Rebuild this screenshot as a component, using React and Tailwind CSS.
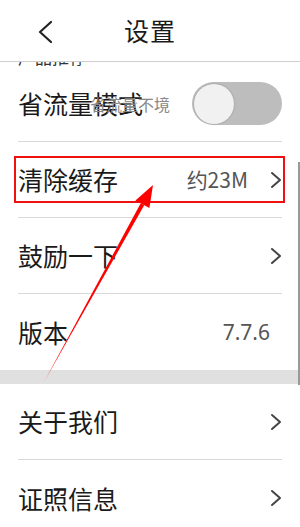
import React from "react";

const font = { fontFamily: '"Noto Sans CJK SC", "Noto Sans", sans-serif' };

const Chevron = () => (
    <svg width="12" height="18" viewBox="0 0 12 18" className="shrink-0">
        <path d="M2 2 L10 9 L2 16" fill="none" stroke="#444" strokeWidth="2" strokeLinecap="round" strokeLinejoin="round" />
    </svg>
);

const Row = ({ children, last }) => (
    <div className={"relative flex items-center h-[76px] " + (last ? "" : "border-b border-[#d9d9d9]")}>
        {children}
    </div>
);

export default function App() {
    return (
        <div className="relative w-[300px] h-[527px] overflow-hidden bg-white text-[#1a1a1a]" style={font}>
            {/* header */}
            <div className="relative flex items-center justify-center h-[62px] border-b border-[#cfcfcf]">
                <svg width="16" height="24" viewBox="0 0 16 24" className="absolute left-[37px] top-[20px]">
                    <path d="M14 2 L3 12 L14 22" fill="none" stroke="#222" strokeWidth="2.2" strokeLinecap="round" strokeLinejoin="round" />
                </svg>
                <span className="text-[25px] leading-none tracking-[1px]">设置</span>
            </div>

            <div className="px-[18px]">
                {/* partly hidden item under header */}
                <div className="h-[4px] overflow-hidden">
                    <div className="-mt-[14px] text-[17px] leading-[18px] text-[#333]">产品推荐</div>
                </div>

                <Row>
                    <span className="text-[25px] leading-none">省流量模式</span>
                    <span className="-ml-[53px] text-[16px] leading-none text-[#888]">省流量不境</span>
                    <div className="ml-auto w-[90px] h-[43px] rounded-full bg-[#bdbdbd] flex items-center px-[2px]">
                        <div className="w-[40px] h-[40px] rounded-full bg-[#f1f1f1] shadow-[0_0_2px_rgba(0,0,0,0.25)]" />
                    </div>
                </Row>

                <Row>
                    <span className="text-[25px] leading-none">清除缓存</span>
                    <span className="ml-auto mr-[22px] text-[21px] leading-none text-[#555]">约23M</span>
                    <Chevron />
                    <div className="absolute top-[14px] left-[-4px] right-[-3px] h-[47px] border-2 border-[#f01010]" />
                </Row>

                <Row>
                    <span className="text-[25px] leading-none">鼓励一下</span>
                    <span className="ml-auto" />
                    <Chevron />
                </Row>

                <Row last>
                    <span className="text-[25px] leading-none">版本</span>
                    <span className="ml-auto mr-[12px] text-[21px] leading-none text-[#555]" style={{ fontFamily: '"Noto Sans", sans-serif' }}>7.7.6</span>
                </Row>
            </div>

            <div className="h-[14px] bg-[#e0e0e0]" />

            <div className="px-[18px]">
                <Row>
                    <span className="text-[25px] leading-none">关于我们</span>
                    <span className="ml-auto" />
                    <Chevron />
                </Row>
                <Row last>
                    <span className="text-[25px] leading-none">证照信息</span>
                    <span className="ml-auto" />
                    <Chevron />
                </Row>
            </div>

            {/* scrollbar */}
            <div className="absolute left-[298px] top-[162px] w-[2px] h-[223px] bg-[#999]" />

            {/* annotation arrow */}
            <svg className="absolute inset-0 pointer-events-none" width="300" height="527" viewBox="0 0 300 527">
                <polygon points="44,382 140.7,203.3 144.2,205.3" fill="#f00" />
                <polygon points="153,185 135.4,200.4 149.4,208.1" fill="#f00" />
            </svg>
        </div>
    );
}
